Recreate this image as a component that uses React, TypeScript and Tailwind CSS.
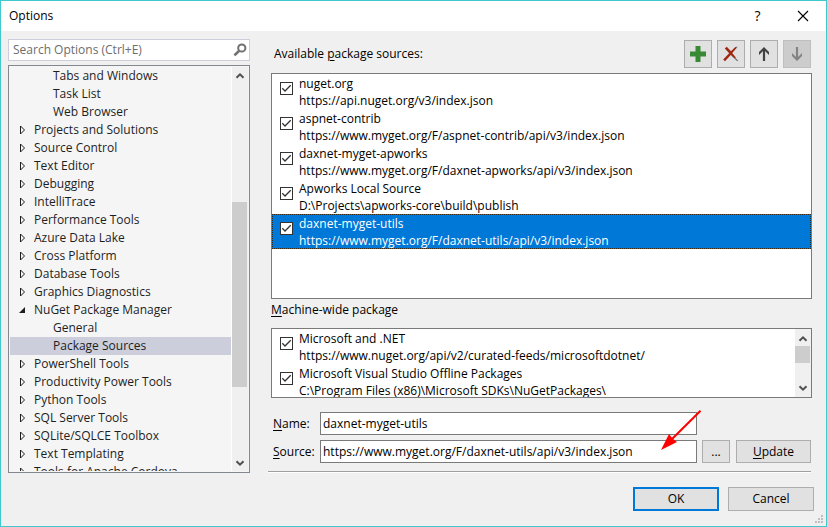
import React, { useState } from "react";

type TreeItem = { label: string; kind: "child" | "closed" | "open" };

const treeItems: TreeItem[] = [
  { label: "Tabs and Windows", kind: "child" },
  { label: "Task List", kind: "child" },
  { label: "Web Browser", kind: "child" },
  { label: "Projects and Solutions", kind: "closed" },
  { label: "Source Control", kind: "closed" },
  { label: "Text Editor", kind: "closed" },
  { label: "Debugging", kind: "closed" },
  { label: "IntelliTrace", kind: "closed" },
  { label: "Performance Tools", kind: "closed" },
  { label: "Azure Data Lake", kind: "closed" },
  { label: "Cross Platform", kind: "closed" },
  { label: "Database Tools", kind: "closed" },
  { label: "Graphics Diagnostics", kind: "closed" },
  { label: "NuGet Package Manager", kind: "open" },
  { label: "General", kind: "child" },
  { label: "Package Sources", kind: "child" },
  { label: "PowerShell Tools", kind: "closed" },
  { label: "Productivity Power Tools", kind: "closed" },
  { label: "Python Tools", kind: "closed" },
  { label: "SQL Server Tools", kind: "closed" },
  { label: "SQLite/SQLCE Toolbox", kind: "closed" },
  { label: "Text Templating", kind: "closed" },
  { label: "Tools for Apache Cordova", kind: "closed" },
];

type Source = { name: string; url: string };

const packageSources: Source[] = [
  { name: "nuget.org", url: "https://api.nuget.org/v3/index.json" },
  { name: "aspnet-contrib", url: "https://www.myget.org/F/aspnet-contrib/api/v3/index.json" },
  { name: "daxnet-myget-apworks", url: "https://www.myget.org/F/daxnet-apworks/api/v3/index.json" },
  { name: "Apworks Local Source", url: "D:\\Projects\\apworks-core\\build\\publish" },
  { name: "daxnet-myget-utils", url: "https://www.myget.org/F/daxnet-utils/api/v3/index.json" },
];

const machineSources: Source[] = [
  { name: "Microsoft and .NET", url: "https://www.nuget.org/api/v2/curated-feeds/microsoftdotnet/" },
  { name: "Microsoft Visual Studio Offline Packages", url: "C:\\Program Files (x86)\\Microsoft SDKs\\NuGetPackages\\" },
];

function Expander({ kind }: { kind: TreeItem["kind"] }) {
  return (
    <svg className="h-2.5 w-2 shrink-0" viewBox="0 0 8 10" aria-hidden="true">
      {kind === "closed" && <path d="M2.5 1v8L6.5 5z" fill="none" stroke="#1e1e1e" />}
      {kind === "open" && <path d="M7 2v6H1z" fill="#1e1e1e" />}
    </svg>
  );
}

function Chevron({ down = false }: { down?: boolean }) {
  return (
    <svg className="h-4 w-4 shrink-0" viewBox="0 0 16 16" aria-hidden="true">
      <path d={down ? "M4.5 6.2 8 9.7l3.5-3.5" : "M4.5 10.8 8 7.3l3.5 3.5"} fill="none" stroke="#505050" strokeWidth="2" />
    </svg>
  );
}

function SourceRow({ source, selected = false }: { source: Source; selected?: boolean }) {
  return (
    <label
      className={
        selected
          ? "flex h-[35px] shrink-0 items-start border border-dotted border-[#3a2a14] bg-[#0078d7] pl-[7px] text-white"
          : "flex h-[35px] shrink-0 items-start border border-transparent pl-[7px]"
      }
    >
      <span className="mt-[7px] grid shrink-0">
        <input
          type="checkbox"
          defaultChecked
          className="peer col-start-1 row-start-1 size-[13px] appearance-none border border-[#333333] bg-white"
        />
        <svg
          className="pointer-events-none col-start-1 row-start-1 size-[13px] opacity-0 peer-checked:opacity-100"
          viewBox="0 0 13 13"
          aria-hidden="true"
        >
          <path d="M2.3 6.3 5 9l5.7-5.7" fill="none" stroke="#333333" strokeWidth="1.3" />
        </svg>
      </span>
      <span className="ml-1.5 flex min-w-0 flex-col leading-[17px]">
        <span className="whitespace-nowrap">{source.name}</span>
        <span className="whitespace-nowrap">{source.url}</span>
      </span>
    </label>
  );
}

function ToolButton({ label, disabled, children }: { label: string; disabled?: boolean; children: React.ReactNode }) {
  return (
    <button
      type="button"
      aria-label={label}
      disabled={disabled}
      className="flex size-7 items-center justify-center border border-[#adadad] bg-[#e1e1e1] disabled:border-[#bfbfbf] disabled:bg-[#cccccc]"
    >
      {children}
    </button>
  );
}

const button = "border border-[#adadad] bg-[#e1e1e1] text-center";
const textBox = "h-[23px] min-w-0 flex-1 border border-[#7a7a7a] bg-white px-0.5 outline-none";
const key = "underline underline-offset-2";

export default function App() {
  const [active, setActive] = useState("Package Sources");

  return (
    <div className="flex h-screen flex-col overflow-hidden border border-[#40c8cc] bg-[#f0f0f0] font-['Open_Sans','Noto_Sans',sans-serif] text-[12px] leading-4 text-black">
      <header className="flex h-[30px] shrink-0 items-center bg-white pl-2">
        <h1 className="flex-1">Options</h1>
        <button type="button" aria-label="Help" className="flex h-full w-[45px] items-center justify-center text-[14px]">
          ?
        </button>
        <button type="button" aria-label="Close" className="flex h-full w-[46px] items-center justify-center">
          <svg className="size-3" viewBox="0 0 12 12" aria-hidden="true">
            <path d="m1 1 10 10M11 1 1 11" fill="none" stroke="#000" strokeWidth="1.1" />
          </svg>
        </button>
      </header>

      <main className="flex min-h-0 flex-1 gap-[18px] pl-[7px] pr-3.5 pt-2">
        <nav className="flex w-[242px] shrink-0 flex-col gap-1">
          <div className="flex h-[22px] shrink-0 items-center border border-[#cccedb] bg-white pl-1 pr-0.5">
            <input
              type="search"
              aria-label="Search Options"
              placeholder="Search Options (Ctrl+E)"
              className="min-w-0 flex-1 bg-transparent outline-none placeholder:text-[#6d6d6d]"
            />
            <svg className="size-3.5" viewBox="0 0 14 14" aria-hidden="true">
              <circle cx="8.8" cy="5" r="3.6" fill="none" stroke="#717171" strokeWidth="2" />
              <path d="M6.2 7.8 1.4 12.4" fill="none" stroke="#717171" strokeWidth="2.6" />
            </svg>
          </div>
          <div className="flex h-[408px] shrink-0 border border-[#828790] bg-[#f5f5f5] p-px">
            <ul className="min-w-0 flex-1 overflow-hidden">
              {treeItems.map((item) => (
                <li key={item.label}>
                  <button
                    type="button"
                    onClick={() => setActive(item.label)}
                    className={
                      (item.label === active ? "bg-[#cccedb] " : "") +
                      (item.kind === "child" ? "pl-[35px] " : "pl-2 ") +
                      "flex h-[18px] w-full items-center gap-2 whitespace-nowrap text-left text-[#1e1e1e]"
                    }
                  >
                    {item.kind !== "child" && <Expander kind={item.kind} />}
                    <span className={item.kind === "child" ? "pl-2" : ""}>{item.label}</span>
                  </button>
                </li>
              ))}
            </ul>
            <div className="flex w-[17px] shrink-0 flex-col items-center justify-between border-l border-white bg-[#f0f0f0]">
              <Chevron />
              <div className="mb-[68px] mt-auto h-[185px] w-[15px] self-start bg-[#cdcdcd]" />
              <Chevron down />
            </div>
          </div>
        </nav>

        <section className="flex min-w-0 flex-1 flex-col">
          <div className="flex flex-col pl-[3px]">
            <div className="flex items-center gap-[5px] pl-[3px] pr-px pt-px">
              <h2 className="flex-1">
                Available <span className={key}>p</span>ackage sources:
              </h2>
              <ToolButton label="Add">
                <svg className="size-4" viewBox="0 0 16 16" aria-hidden="true">
                  <path d="M5.5 0h5v5.5H16v5h-5.5V16h-5v-5.5H0v-5h5.5z" fill="#388a34" />
                </svg>
              </ToolButton>
              <ToolButton label="Remove">
                <svg className="size-4" viewBox="0 0 16 16" aria-hidden="true">
                  <path d="M8.6 7.2 14.8.8 13 .8 7.4 6zM9 8.2l6.4 6.6-1.2.4L8 9.6z" fill="#777777" />
                  <path d="M3.8.8 8 5.2 12.4 1l1.2.8L9.2 7l3.6 4.4-1 .8L8 8.8 2 15.2.2 13.4 6.2 7.2 1.8 2.6z" fill="#a1260d" />
                </svg>
              </ToolButton>
              <ToolButton label="Move up">
                <svg className="size-4" viewBox="0 0 16 16" aria-hidden="true">
                  <path d="M8 15V3" fill="none" stroke="#424242" strokeWidth="2.2" />
                  <path d="M8 1 3 6v3l5-5 5 5V6z" fill="#424242" />
                </svg>
              </ToolButton>
              <ToolButton label="Move down" disabled>
                <svg className="size-4" viewBox="0 0 16 16" aria-hidden="true">
                  <path d="M8 1v12" fill="none" stroke="#838383" strokeWidth="2.2" />
                  <path d="M8 15 3 10V7l5 5 5-5v3z" fill="#838383" />
                </svg>
              </ToolButton>
            </div>

            <div className="mt-[5px] flex h-[226px] flex-col border border-[#7a7a7a] bg-white">
              {packageSources.map((s) => (
                <SourceRow key={s.name} source={s} selected={s.name === "daxnet-myget-utils"} />
              ))}
            </div>

            <h2 className="mt-[3px]">
              <span className={key}>M</span>achine-wide package
            </h2>
            <div className="mt-2.5 flex h-[70px] border border-[#7a7a7a] bg-white">
              <div className="min-w-0 flex-1 overflow-hidden">
                {machineSources.map((s) => (
                  <SourceRow key={s.name} source={s} />
                ))}
              </div>
              <div className="flex w-4 shrink-0 flex-col items-center bg-[#f0f0f0] py-px">
                <Chevron />
                <div className="h-[17px] w-[15px] self-start bg-[#cdcdcd]" />
                <div className="mt-auto">
                  <Chevron down />
                </div>
              </div>
            </div>
          </div>

          <form className="mt-3.5 flex flex-col gap-[5px] pl-[5px] pr-px" onSubmit={(e) => e.preventDefault()}>
            <div className="flex items-center pr-[114px]">
              <label htmlFor="source-name" className="w-[47px]">
                <span className={key}>N</span>ame:
              </label>
              <input id="source-name" defaultValue="daxnet-myget-utils" className={textBox} />
            </div>
            <div className="flex items-center">
              <label htmlFor="source-url" className="w-[47px]">
                <span className={key}>S</span>ource:
              </label>
              <div className="relative flex min-w-0 flex-1">
                <input
                  id="source-url"
                  defaultValue="https://www.myget.org/F/daxnet-utils/api/v3/index.json"
                  className={textBox}
                />
                {/* Callout arrow pointing at the source address */}
                <svg
                  className="pointer-events-none absolute -right-1 -top-[30px] h-10 w-10"
                  viewBox="0 0 40 40"
                  aria-hidden="true"
                >
                  <path d="M39.5 .8 11 29" fill="none" stroke="#ff0000" strokeWidth="2" />
                  <path d="M0 40 8 24l3.5 4.5L16 32z" fill="#ff0000" />
                </svg>
              </div>
              <button type="button" aria-label="Browse" className={button + " ml-[5px] h-[23px] w-7"}>
                ...
              </button>
              <button type="submit" className={button + " ml-1.5 h-[23px] w-[75px]"}>
                <span className={key}>U</span>pdate
              </button>
            </div>
          </form>

          <hr className="mr-px mt-2 h-0.5 border-b border-t border-b-white border-t-[#a0a0a0]" />
        </section>
      </main>

      <footer className="flex shrink-0 items-end justify-end">
        <div className="flex gap-[9px] pb-[15px]">
          <button type="button" className="h-6 w-[86px] border-2 border-[#0078d7] bg-[#e1e1e1] text-center">
            OK
          </button>
          <button type="button" className={button + " h-6 w-[86px]"}>
            Cancel
          </button>
        </div>
        <svg className="mb-0.5 mr-0.5 h-2.5 w-2.5" viewBox="0 0 10 10" aria-hidden="true">
          <path d="M7 1h2v2H7zM4 4h2v2H4zM7 4h2v2H7zM1 7h2v2H1zM4 7h2v2H4zM7 7h2v2H7z" fill="#bfbfbf" />
        </svg>
      </footer>
    </div>
  );
}
